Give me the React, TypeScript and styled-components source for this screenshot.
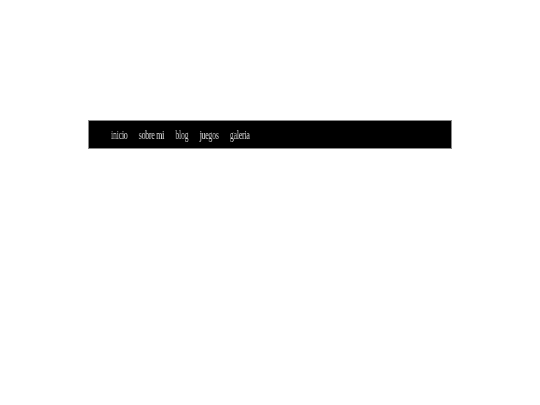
import styled, {createGlobalStyle} from "styled-components";

const GlobalStyle = createGlobalStyle`
  body {
    margin: 0;
    background: #ffffff;
    font-family: "Liberation Serif", serif;
  }
`;

const links = ["inicio", "sobre mi", "blog", "juegos", "galeria"];

const App = () => {
  return (
    <Page>
      <GlobalStyle />
      <NavBar>
        <NavList>
          {links.map((l) => (
            <NavItem key={l}>
              <NavLink href="#">{l}</NavLink>
            </NavItem>
          ))}
        </NavList>
      </NavBar>
    </Page>
  );
};

const Page = styled.div`
  padding-top: 120px;
  display: flex;
  justify-content: center;
`;

const NavBar = styled.nav`
  width: 364px;
  height: 29px;
  box-sizing: border-box;
  background: #000;
  border: 1px solid #8a8a8a;
  display: flex;
  align-items: center;
  padding-bottom: 2px;
`;

// the reference text is a very narrow serif, so squeeze the whole row
const NavList = styled.ul`
  list-style: none;
  margin: 0 0 0 22px;
  padding: 0;
  display: flex;
  gap: 17px;
  transform: scaleX(0.66);
  transform-origin: left center;
  will-change: transform;
  -webkit-font-smoothing: antialiased;
`;

const NavItem = styled.li`
  margin: 0;
`;

const NavLink = styled.a`
  color: #d4d4d4;
  text-decoration: none;
  font-size: 12px;
  letter-spacing: -0.4px;
`;

export default App;
